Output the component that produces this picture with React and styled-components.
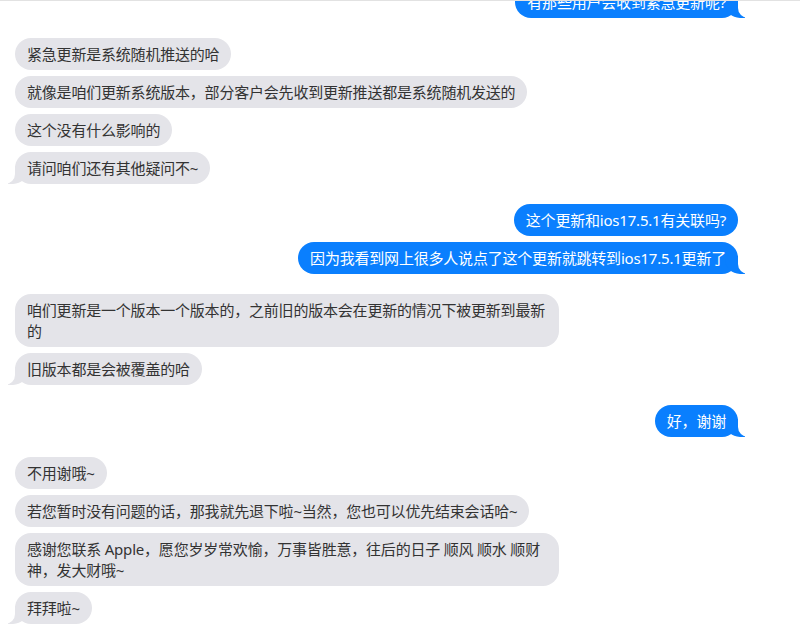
import React from "react";
import styled, { createGlobalStyle, css } from "styled-components";

const GlobalStyle = createGlobalStyle`
  html, body { margin: 0; padding: 0; background: #ffffff; }
  body { font-family: "Noto Sans", "Noto Sans CJK SC", sans-serif; }
`;

const Viewport = styled.div`
  width: 800px;
  height: 638px;
  overflow: hidden;
  box-sizing: border-box;
  border-top: 1px solid #e2e2e2;
  background: #ffffff;
`;

const Thread = styled.div`
  display: flex;
  flex-direction: column;
  gap: 20px;
  margin-top: -15px;
  padding: 0 62px 0 15px;
`;

const Group = styled.div`
  display: flex;
  flex-direction: column;
  align-items: ${(p) => (p.$me ? "flex-end" : "flex-start")};
  gap: 6px;
`;

const Bubble = styled.div`
  position: relative;
  max-width: 520px;
  padding: 5.5px 12px;
  border-radius: 16px;
  font-size: 15px;
  line-height: 21px;
  letter-spacing: -0.2px;
  word-break: break-all;
  background: ${(p) => (p.$me ? "#0a7ffe" : "#e4e4e9")};
  color: ${(p) => (p.$me ? "#ffffff" : "#333333")};

  ${(p) =>
    p.$tail &&
    (p.$me
      ? css`
          &::before {
            content: "";
            position: absolute;
            bottom: 0;
            right: -7px;
            width: 20px;
            height: 18px;
            background: #0a7ffe;
            border-bottom-left-radius: 15px;
          }
          &::after {
            content: "";
            position: absolute;
            bottom: 0;
            right: -10px;
            width: 10px;
            height: 18px;
            background: #ffffff;
            border-bottom-left-radius: 10px;
          }
        `
      : css`
          &::before {
            content: "";
            position: absolute;
            bottom: 0;
            left: -7px;
            width: 20px;
            height: 18px;
            background: #e4e4e9;
            border-bottom-right-radius: 15px;
          }
          &::after {
            content: "";
            position: absolute;
            bottom: 0;
            left: -10px;
            width: 10px;
            height: 18px;
            background: #ffffff;
            border-bottom-right-radius: 10px;
          }
        `)}
`;

const Text = styled.span`
  position: relative;
  z-index: 1;
`;

const groups = [
  { me: true, msgs: ["有那些用户会收到紧急更新呢?"] },
  {
    me: false,
    msgs: [
      "紧急更新是系统随机推送的哈",
      "就像是咱们更新系统版本，部分客户会先收到更新推送都是系统随机发送的",
      "这个没有什么影响的",
      "请问咱们还有其他疑问不~",
    ],
  },
  {
    me: true,
    msgs: ["这个更新和ios17.5.1有关联吗?", "因为我看到网上很多人说点了这个更新就跳转到ios17.5.1更新了"],
  },
  {
    me: false,
    msgs: [
      "咱们更新是一个版本一个版本的，之前旧的版本会在更新的情况下被更新到最新的",
      "旧版本都是会被覆盖的哈",
    ],
  },
  { me: true, msgs: ["好，谢谢"] },
  {
    me: false,
    msgs: [
      "不用谢哦~",
      "若您暂时没有问题的话，那我就先退下啦~当然，您也可以优先结束会话哈~",
      "感谢您联系 Apple，愿您岁岁常欢愉，万事皆胜意，往后的日子 顺风 顺水 顺财神，发大财哦~",
      "拜拜啦~",
    ],
  },
];

export default function App() {
  return (
    <>
      <GlobalStyle />
      <Viewport>
        <Thread>
          {groups.map((g, gi) => (
            <Group key={gi} $me={g.me}>
              {g.msgs.map((m, mi) => (
                <Bubble key={mi} $me={g.me} $tail={mi === g.msgs.length - 1}>
                  <Text>{m}</Text>
                </Bubble>
              ))}
            </Group>
          ))}
        </Thread>
      </Viewport>
    </>
  );
}
